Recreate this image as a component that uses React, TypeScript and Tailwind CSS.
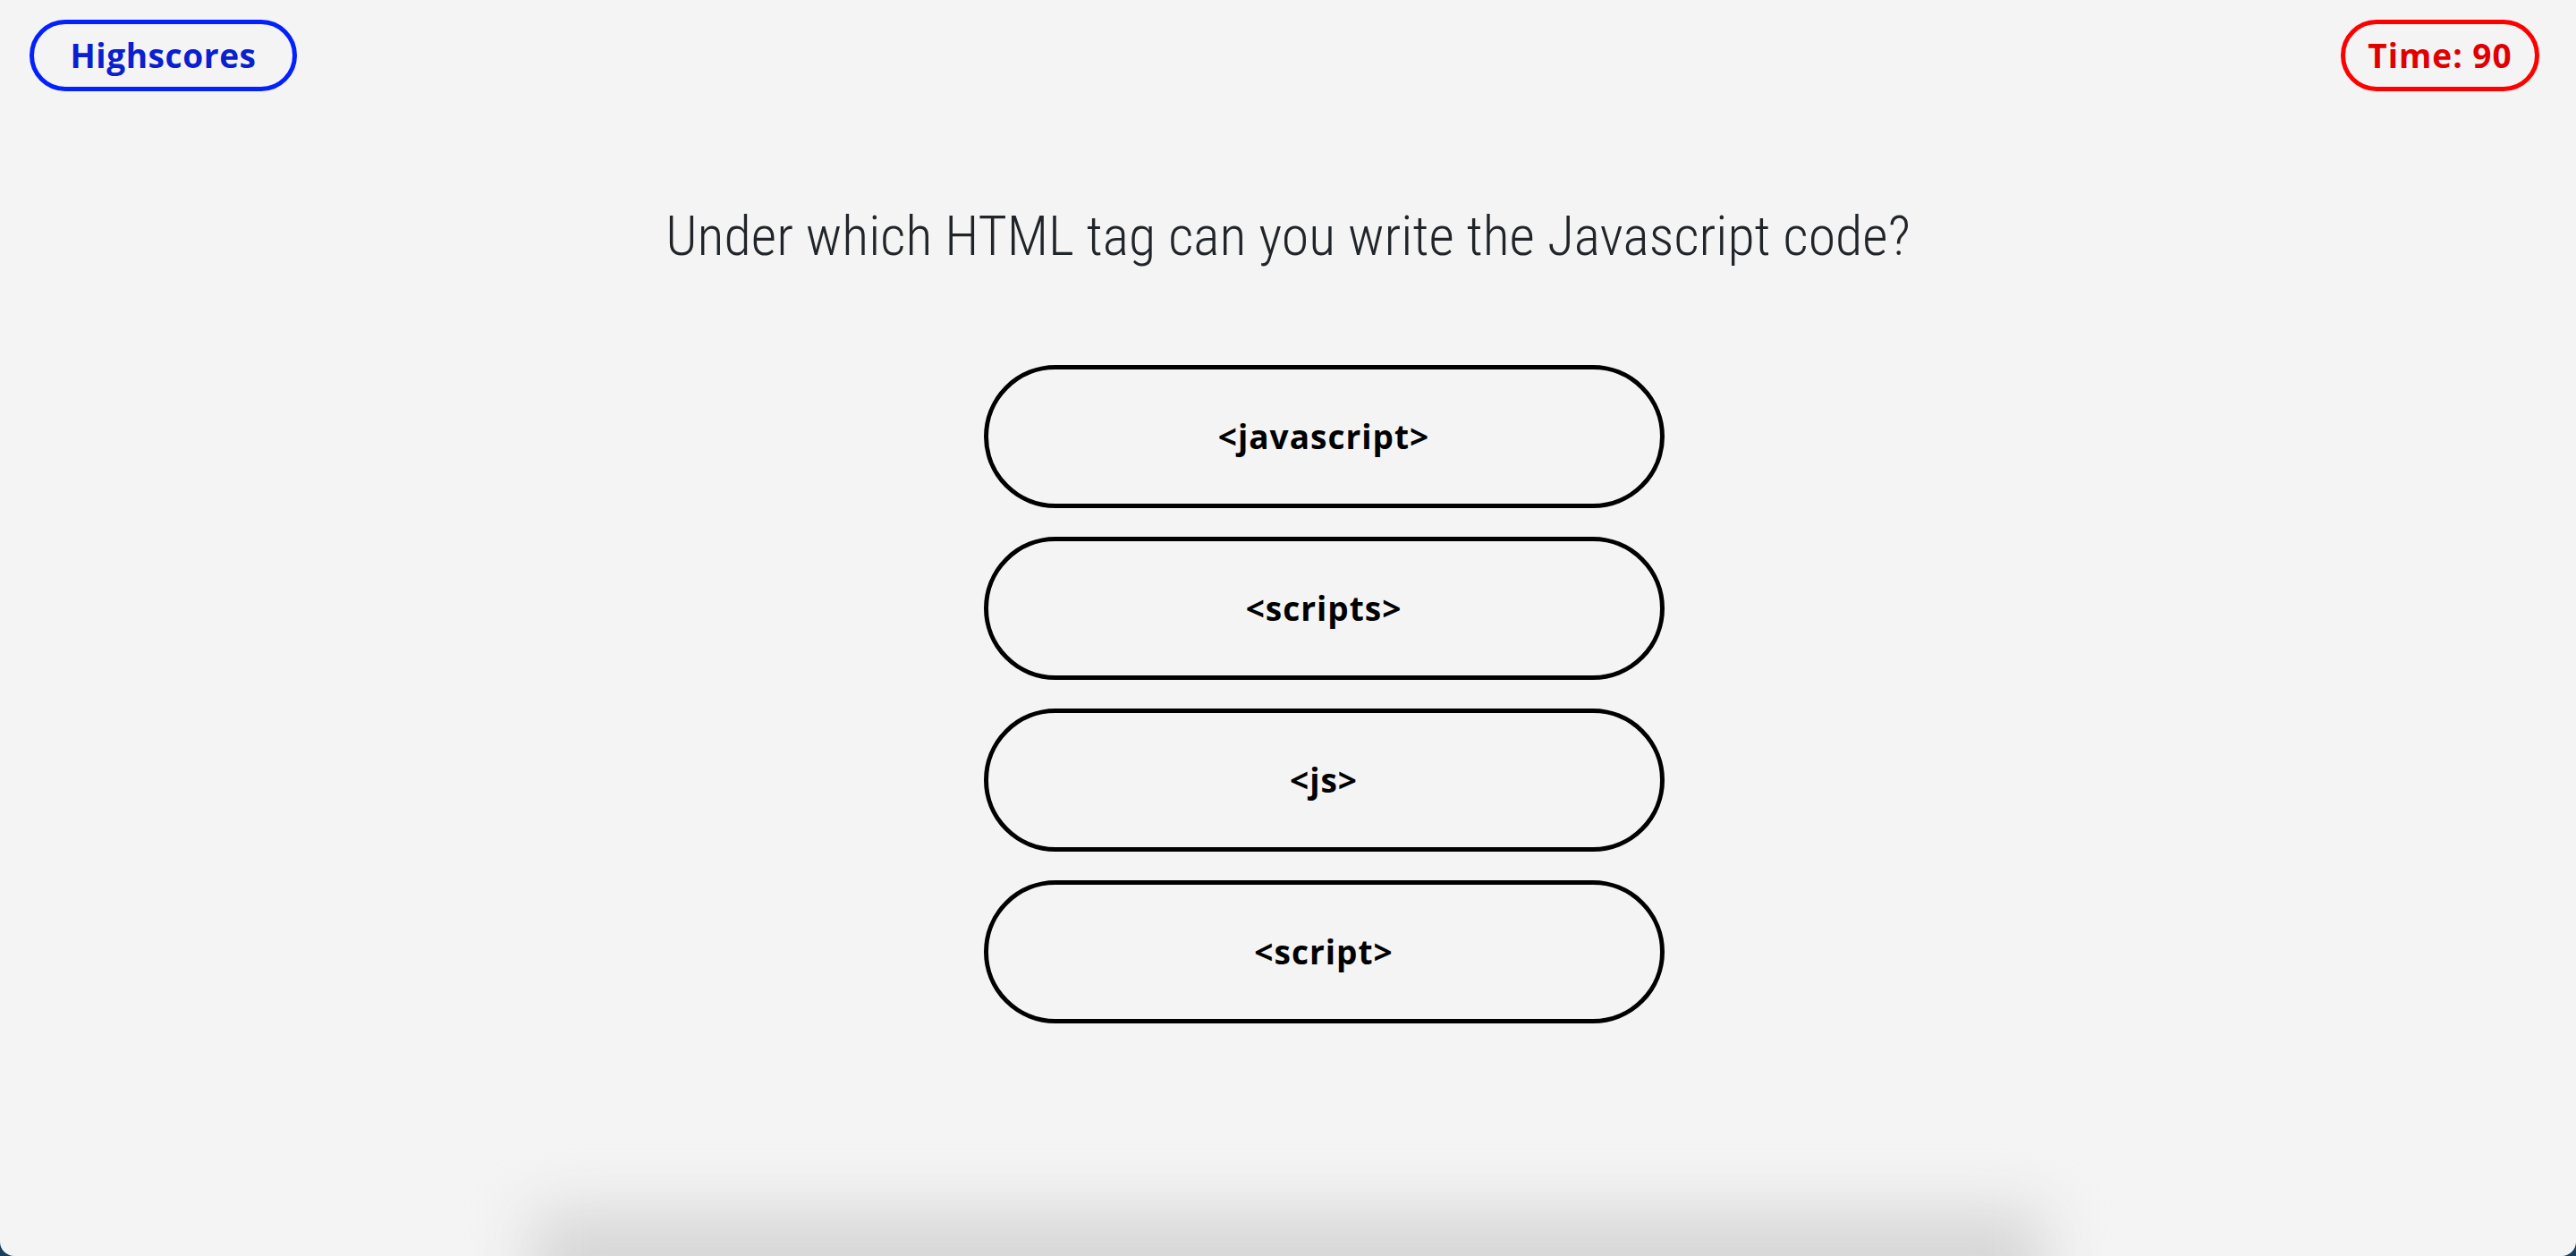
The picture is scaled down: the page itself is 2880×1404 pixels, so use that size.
const answers = ['<javascript>', '<scripts>', '<js>', '<script>'];

const App = () => {
    return (
        <div className="w-full h-screen bg-[#17405e]">
            <div
                className="relative w-full h-full bg-[#f4f4f4] rounded-b-[16px] overflow-hidden flex flex-col"
                style={{ fontFamily: '"Open Sans", "Noto Sans", sans-serif' }}
            >
                <header className="flex justify-between items-start pt-[22px] pl-[33px] pr-[41px]">
                    <button className="w-[299px] h-[80px] rounded-full border-[5px] border-[#0320ff] text-[#0a1fd0] text-[37px] tracking-[0.6px] font-bold flex items-center justify-center">
                        Highscores
                    </button>
                    <div className="w-[222px] h-[80px] rounded-full border-[5px] border-[#ff0000] text-[#e00000] text-[37px] tracking-[1px] font-bold flex items-center justify-center">
                        Time: 90
                    </div>
                </header>

                <h1
                    className="mt-[122px] text-center text-[62px] leading-[80px] font-light text-[#212529]"
                    style={{ fontFamily: '"Roboto Condensed", "DejaVu Sans Condensed", sans-serif' }}
                >
                    Under which HTML tag can you write the Javascript code?
                </h1>

                <ul className="mt-[104px] pl-[80px] flex flex-col items-center gap-[32px]">
                    {answers.map((a) => (
                        <li key={a}>
                            <button className="w-[761px] h-[160px] rounded-full border-[5px] border-black text-black text-[37px] tracking-[1px] font-bold flex items-center justify-center">
                                {a}
                            </button>
                        </li>
                    ))}
                </ul>

                <div className="mt-auto -mb-[80px] mx-auto w-[1690px] h-[130px] bg-[#d6d6d6] blur-[34px]" />
            </div>
        </div>
    );
};

export default App;
